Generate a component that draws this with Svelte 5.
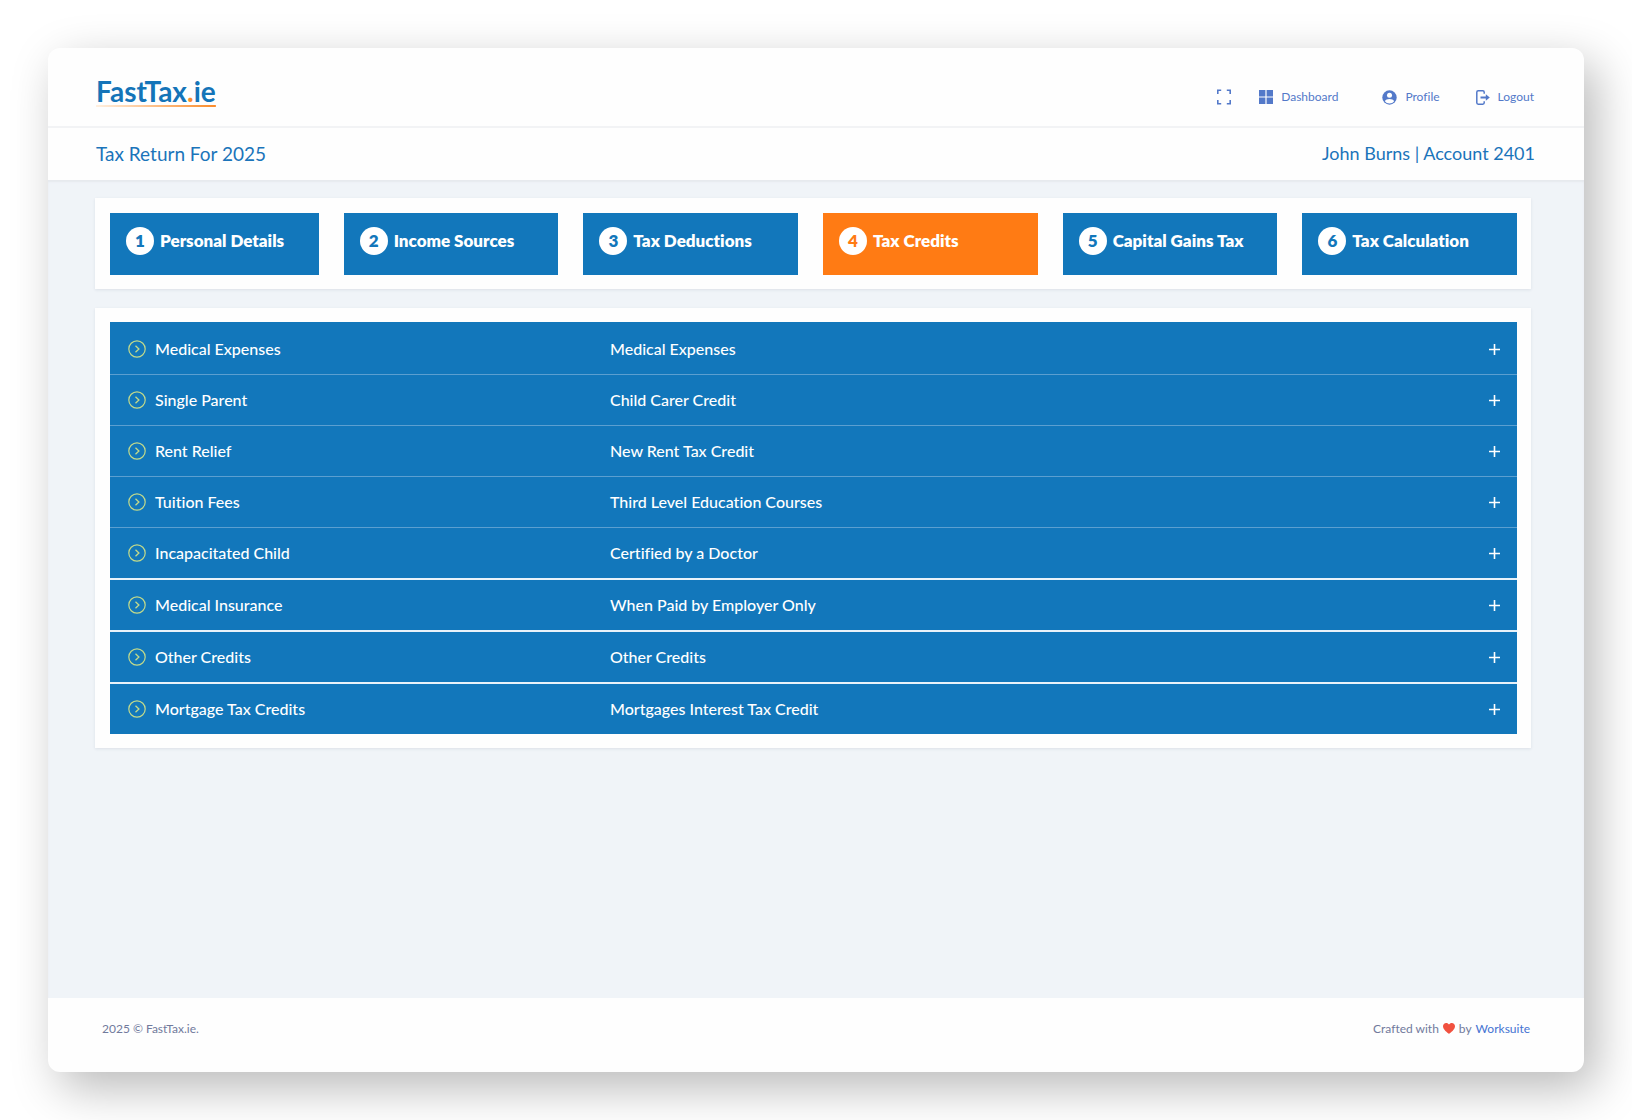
<script>
    const steps = [
        "Personal Details",
        "Income Sources",
        "Tax Deductions",
        "Tax Credits",
        "Capital Gains Tax",
        "Tax Calculation",
    ];

    const credits = [
        { name: "Medical Expenses", detail: "Medical Expenses" },
        { name: "Single Parent", detail: "Child Carer Credit" },
        { name: "Rent Relief", detail: "New Rent Tax Credit" },
        { name: "Tuition Fees", detail: "Third Level Education Courses" },
        { name: "Incapacitated Child", detail: "Certified by a Doctor", strong: true },
        { name: "Medical Insurance", detail: "When Paid by Employer Only", strong: true },
        { name: "Other Credits", detail: "Other Credits", strong: true },
        { name: "Mortgage Tax Credits", detail: "Mortgages Interest Tax Credit" },
    ];

    let activeStep = $state(3);
</script>

<div class="page">
    <div class="window">
        <header class="topbar">
            <a class="logo" href="#home">FastTax<span class="dot">.</span>ie</a>
            <nav class="nav">
                <div class="nav-group tools">
                    <button class="nav-item" aria-label="Fullscreen">
                        <svg width="14" height="16" viewBox="0 0 14 16" fill="none" stroke="currentColor" stroke-width="1.6">
                            <path d="M.8 5V1.300h3.400M9.800 1.300h3.400V5M13.200 11v3.700H9.800M4.200 14.700H.8V11" />
                        </svg>
                    </button>
                    <a class="nav-item" href="#dashboard">
                        <svg width="14" height="14" viewBox="0 0 14 14" fill="currentColor">
                            <path d="M0 0h6.400v6.400H0zM7.600 0H14v6.400H7.600zM0 7.600h6.400V14H0zM7.600 7.600H14V14H7.600z" />
                        </svg>
                        Dashboard
                    </a>
                </div>
                <div class="nav-group account">
                    <a class="nav-item" href="#profile">
                        <svg width="15" height="15" viewBox="0 0 15 15">
                            <circle cx="7.5" cy="7.500" r="7.2" fill="currentColor" />
                            <circle cx="7.5" cy="5.300" r="2.500" fill="#fff" />
                            <path d="M2.800 11.200C3.500 9.600 5.400 8.900 7.500 8.900s4 .7 4.700 2.300A6 6 0 0 1 7.500 13.400a6 6 0 0 1-4.700-2.200z" fill="#fff" />
                        </svg>
                        Profile
                    </a>
                    <a class="nav-item" href="#logout">
                        <svg width="14" height="15" viewBox="0 0 14 15" fill="none" stroke="currentColor" stroke-width="1.500">
                            <path d="M8.200 3.800V2.200Q8.200.8 6.800.8H2.200Q.8.8.8 2.200v10.600q0 1.400 1.400 1.400h4.600q1.400 0 1.400-1.400v-1.600" />
                            <path d="M4.500 7.500h6" stroke-width="1.800" />
                            <path d="M9.800 4.300 13.800 7.500 9.800 10.700z" fill="currentColor" stroke="none" />
                        </svg>
                        Logout
                    </a>
                </div>
            </nav>
        </header>

        <div class="titlebar">
            <h1>Tax Return For 2025</h1>
            <p>John Burns | Account 2401</p>
        </div>

        <main>
            <section class="panel steps">
                {#each steps as step, index}
                    <button
                        class="step"
                        class:active={activeStep === index}
                        onclick={() => (activeStep = index)}
                    >
                        <span class="number">{index + 1}</span>
                        <span class="label">{step}</span>
                    </button>
                {/each}
            </section>

            <section class="panel">
                <ul class="credits">
                    {#each credits as credit}
                        <li class:strong={credit.strong}>
                            <button class="credit">
                                <span class="name">
                                    <svg width="18" height="18" viewBox="0 0 18 18" fill="none" stroke="#c3da8a">
                                        <circle cx="9" cy="9" r="8.200" stroke-width="1.200" />
                                        <path d="M7.500 5.800 10.900 9l-3.400 3.200" stroke-width="1.300" />
                                    </svg>
                                    <span class="label">{credit.name}</span>
                                </span>
                                <span class="label">{credit.detail}</span>
                                <svg width="11" height="11" viewBox="0 0 11 11" stroke="#fff" stroke-width="1.600">
                                    <path d="M5.500 0v11M0 5.500h11" />
                                </svg>
                            </button>
                        </li>
                    {/each}
                </ul>
            </section>
        </main>

        <footer>
            <span>2025 © FastTax.ie.</span>
            <span class="crafted">
                Crafted with
                <svg width="12" height="11" viewBox="0 0 12 11" fill="#f1513f">
                    <path d="M6 11C4.500 9.600 0 6.800 0 3.300 0 1.400 1.400 0 3.200 0 4.400 0 5.400.6 6 1.600 6.600.6 7.600 0 8.800 0 10.600 0 12 1.400 12 3.300 12 6.800 7.500 9.600 6 11z" />
                </svg>
                by <a href="#worksuite">Worksuite</a>
            </span>
        </footer>
    </div>
</div>

<style>
    :global(body) {
        margin: 0;
        background: #fff;
    }

    .page {
        display: flex;
        box-sizing: border-box;
        min-height: 100vh;
        padding: 48px;
        font-family: Lato, "Noto Sans", sans-serif;
        font-variant-ligatures: none;
    }

    .window {
        display: flex;
        flex: 1;
        flex-direction: column;
        overflow: hidden;
        border-radius: 12px;
        background: #fefefe;
        box-shadow: 12px 16px 48px rgba(0, 0, 0, 0.28);
    }

    a {
        color: inherit;
        text-decoration: none;
    }

    button {
        margin: 0;
        padding: 0;
        border: 0;
        background: none;
        color: inherit;
        font: inherit;
        font-variant-ligatures: none;
        text-align: left;
        cursor: pointer;
    }

    svg {
        flex: none;
    }

    .topbar {
        display: flex;
        align-items: center;
        justify-content: space-between;
        height: 78px;
        padding: 0 50px 0 48px;
        border-bottom: 2px solid #f2f3f5;
    }

    .logo {
        margin-top: 10px;
        padding-bottom: 2px;
        color: #1474b8;
        font-size: 28px;
        font-weight: 700;
        line-height: 28px;
        background: linear-gradient(90deg, #fff0e0, #fb8c2b) bottom / 100% 2px no-repeat;
    }

    .dot {
        color: #fb8c2b;
    }

    .nav {
        display: flex;
        gap: 44px;
        padding-top: 20px;
        color: #5379c9;
        font-size: 12px;
        line-height: 18px;
    }

    .nav-group {
        display: flex;
    }

    .tools {
        gap: 28px;
    }

    .account {
        gap: 36px;
    }

    .nav-item {
        display: flex;
        align-items: center;
        gap: 8px;
    }

    .titlebar {
        display: flex;
        align-items: center;
        justify-content: space-between;
        height: 50px;
        padding: 0 49px 2px 48px;
        color: #1b74ba;
        font-size: 18px;
    }

    h1,
    p {
        margin: 0;
        font-size: inherit;
        font-weight: 400;
    }

    h1 {
        font-size: 19px;
    }

    main {
        display: flex;
        flex: 1;
        flex-direction: column;
        gap: 19px;
        padding: 18px 53px 48px 47px;
        background: #f0f4f8;
        box-shadow: inset 0 2px 2px #e6e9ee;
    }

    .panel {
        padding: 14px 14px 14px 15px;
        background: #fefefe;
        box-shadow: 0 1px 3px rgba(40, 60, 90, 0.1);
    }

    .steps {
        display: grid;
        grid-template-columns: 209fr repeat(5, 215fr);
        gap: 25px;
        padding-top: 15px;
    }

    .step {
        display: flex;
        align-items: center;
        gap: 6px;
        height: 62px;
        padding: 0 16px 6px;
        background: #1277bb;
        color: #fff;
        font-size: 17px;
        font-weight: 800;
        white-space: nowrap;
    }

    .label {
        padding-bottom: 2px;
    }

    .number {
        width: 28px;
        border-radius: 50%;
        background: #fff;
        color: #1277bb;
        line-height: 28px;
        text-align: center;
    }

    .step.active {
        background: #ff7b14;
    }

    .active .number {
        color: #ff7b14;
    }

    .credits {
        margin: 0;
        padding: 2px 0 0;
        background: #1277bb;
        list-style: none;
    }

    .credits li {
        border-bottom: 1px solid #5b9fd0;
    }

    .credits li.strong {
        border-bottom: 2px solid #e8f2fa;
    }

    .credits li:last-child {
        border-bottom: 0;
    }

    .credit {
        display: grid;
        grid-template-columns: 482fr 879fr auto;
        align-items: center;
        width: 100%;
        height: 50px;
        padding: 0 17px 0 18px;
        color: #fff;
        font-size: 16px;
        font-weight: 500;
    }

    .name {
        display: flex;
        align-items: center;
        gap: 9px;
    }

    footer {
        display: flex;
        align-items: center;
        justify-content: space-between;
        height: 60px;
        padding: 0 54px 14px;
        color: #717a9c;
        font-size: 12px;
    }

    .crafted {
        display: flex;
        align-items: center;
        gap: 4px;
    }

    .crafted a {
        color: #4573d2;
    }
</style>
